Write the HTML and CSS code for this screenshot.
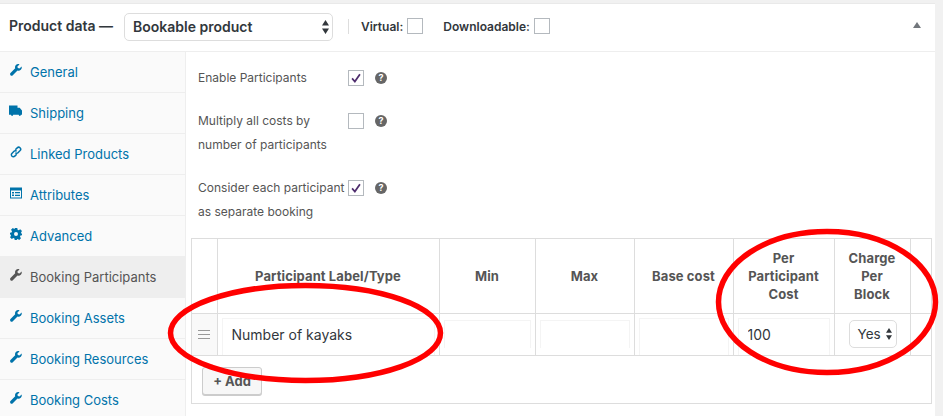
FILE: index.html
```html
<!DOCTYPE html>
<html lang="en">
<head>
<meta charset="utf-8">
<title>Product data</title>
<link rel="stylesheet" href="styles.css">
</head>
<body>
<svg width="0" height="0" class="defs">
  <defs>
    <symbol id="wrench" viewBox="0 0 12 12"><path d="M11.6 2.4 9.5 4.4 7.8 4 7.4 2.4 9.5.4C8.2-.2 6.8.1 5.9 1 5 1.9 4.8 3.2 5.2 4.3L.5 9c-.6.6-.6 1.6 0 2.2.6.7 1.6.7 2.3 0l4.7-4.6c1.1.4 2.4.1 3.3-.8.9-.9 1.2-2.2.8-3.4z"/></symbol>
    <symbol id="truck" viewBox="0 0 13 11"><path d="M0 0h8.5v2.2h2.2L13 5v4.3h-1.1a1.1 1.1 0 0 1-2.2 0H4.2a1.1 1.1 0 0 1-2.2 0H0z"/></symbol>
    <symbol id="link" viewBox="0 0 12 12"><path fill="none" stroke="currentColor" stroke-width="1.5" d="M5.3 3.8 7.2 1.9a1.9 1.9 0 0 1 2.9 2.7L8 6.7a1.9 1.9 0 0 1-2.7 0M6.7 8.2 4.8 10.1a1.9 1.9 0 0 1-2.9-2.7L4 5.3a1.9 1.9 0 0 1 2.7 0"/></symbol>
    <symbol id="card" viewBox="0 0 12 11"><path fill-rule="evenodd" d="M0 0h12v11H0zM1 3v7h10V3zM2 4.4h2v1.6H2zM5 4.6h5v1.1H5zM2 7h2v1.6H2zM5 7.3h5v1.1H5z"/></symbol>
    <symbol id="gear" viewBox="0 0 12 12"><path fill-rule="evenodd" d="M4.7 0h2.6l.3 1.7 1.1.5L10.200 1.200 12 3l-1 1.400.5 1.200L12 6v1.300l-1.500.3-.5 1.100 1 1.500-1.800 1.800-1.500-1-1.100.5L7.300 12H4.700l-.3-1.500-1.100-.5-1.500 1L0 9.200l1-1.500-.5-1.100L0 6.300V4.700l1.500-.3.500-1.100-1-1.500L2.800 0l1.500 1 .5-.3zM6 4a2 2 0 1 0 0 4 2 2 0 0 0 0-4z"/></symbol>
    <symbol id="arrows" viewBox="0 0 7 14"><path d="M3.500 0 7 5.500H0zM0 8.500h7L3.500 14z"/></symbol>
  </defs>
</svg>
<div class="page">
  <div class="panel">
    <header class="head">
      <strong class="title">Product data —</strong>
      <div class="select type-select"><span>Bookable product</span><svg class="sel-arrows"><use href="#arrows"/></svg></div>
      <span class="sep"></span>
      <label class="opt">Virtual: <span class="check"></span></label>
      <label class="opt opt-dl">Downloadable: <span class="check"></span></label>
      <span class="toggle"></span>
    </header>
    <div class="body">
      <nav class="tabs">
        <a class="tab"><svg class="ic"><use href="#wrench"/></svg>General</a>
        <a class="tab"><svg class="ic ic-w"><use href="#truck"/></svg>Shipping</a>
        <a class="tab"><svg class="ic"><use href="#link"/></svg>Linked Products</a>
        <a class="tab"><svg class="ic"><use href="#card"/></svg>Attributes</a>
        <a class="tab"><svg class="ic"><use href="#gear"/></svg>Advanced</a>
        <a class="tab active"><svg class="ic"><use href="#wrench"/></svg>Booking Participants</a>
        <a class="tab"><svg class="ic"><use href="#wrench"/></svg>Booking Assets</a>
        <a class="tab"><svg class="ic"><use href="#wrench"/></svg>Booking Resources</a>
        <a class="tab"><svg class="ic"><use href="#wrench"/></svg>Booking Costs</a>
      </nav>
      <main class="content">
        <div class="field f1">
          <label class="flabel">Enable Participants</label>
          <span class="check on"><svg viewBox="0 0 16 16"><path d="M3.500 8.500 6.700 12 12.500 3.800" fill="none" stroke="#4f2d6e" stroke-width="2"/></svg></span>
          <span class="help">?</span>
        </div>
        <div class="field f2">
          <label class="flabel">Multiply all costs by number of participants</label>
          <span class="check"></span>
          <span class="help">?</span>
        </div>
        <div class="field f3">
          <label class="flabel">Consider each participant as separate booking</label>
          <span class="check on"><svg viewBox="0 0 16 16"><path d="M3.500 8.500 6.700 12 12.500 3.800" fill="none" stroke="#4f2d6e" stroke-width="2"/></svg></span>
          <span class="help">?</span>
        </div>
        <div class="tablewrap">
          <table>
            <colgroup>
              <col class="c0"><col class="c1"><col class="c2"><col class="c3"><col class="c4"><col class="c5"><col class="c6"><col class="c7">
            </colgroup>
            <thead>
              <tr>
                <th></th>
                <th>Participant Label/Type</th>
                <th>Min</th>
                <th>Max</th>
                <th>Base cost</th>
                <th>Per Participant Cost</th>
                <th>Charge Per Block</th>
                <th></th>
              </tr>
            </thead>
            <tbody>
              <tr>
                <td class="drag"><span class="bars"></span></td>
                <td class="cell-label"><input class="inp" value="Number of kayaks"></td>
                <td><input class="inp short"></td>
                <td><input class="inp short"></td>
                <td><input class="inp"></td>
                <td><input class="inp" value="100"></td>
                <td class="cell-sel"><div class="select yes-select"><span>Yes</span><svg class="sel-arrows"><use href="#arrows"/></svg></div></td>
                <td></td>
              </tr>
            </tbody>
          </table>
          <div class="foot"><button class="btn">+ Add</button></div>
        </div>
      </main>
    </div>
  </div>
</div>
<svg class="marks" width="943" height="416" viewBox="0 0 943 416">
  <ellipse cx="305.500" cy="333" rx="135" ry="47.500"/>
  <ellipse cx="827" cy="302" rx="108.500" ry="70.500"/>
</svg>
</body>
</html>
```
FILE: styles.css
```css
* { box-sizing: border-box; }
html, body { margin: 0; height: 100%; }
body {
  position: relative;
  overflow: hidden;
  background: #f1f1f1;
  font-family: Inter, "Liberation Sans", sans-serif;
  font-size: 12px;
  color: #555;
}
.defs { position: absolute; }
.page { padding: 3px 8px 0 0; height: 416px; }
.panel { background: #fff; height: 413px; border-top: 1px solid #e9e9e9; }

.head {
  display: flex;
  align-items: center;
  height: 48px;
  padding-left: 9px;
  border-bottom: 1px solid #eee;
}
.title { font-size: 14px; font-weight: 600; color: #32373c; width: 115px; margin-top: -4px; }
.select {
  display: flex;
  align-items: center;
  justify-content: space-between;
  background: #fff;
  border: 1px solid #ddd;
  border-radius: 5px;
  color: #32373c;
}
.type-select {
  width: 209px;
  height: 28px;
  margin-top: -2px;
  padding: 0 3px 0 8px;
  font-size: 14px;
  font-weight: 600;
}
.sel-arrows { width: 7px; height: 14px; fill: #32373c; }
.sep { width: 1px; height: 15px; background: #ddd; margin: -3px 12px 0 15px; }
.opt { display: flex; align-items: center; gap: 4px; font-size: 12px; font-weight: 600; color: #32373c; margin-top: -3px; }
.opt-dl { margin-left: 20px; }
.opt .check { margin-top: -1px; }
.toggle {
  margin-left: auto;
  margin-right: 14px;
  margin-top: -6px;
  width: 0; height: 0;
  border-left: 4px solid transparent;
  border-right: 4px solid transparent;
  border-bottom: 6px solid #72777c;
}
.check {
  display: inline-block;
  flex: none;
  width: 16px; height: 16px;
  background: #fff;
  border: 1px solid #b4b9be;
}
.check svg { display: block; width: 14px; height: 14px; }

.body { display: flex; height: 364px; }
.tabs {
  flex: none;
  width: 186px;
  background: #fafafa;
  border-right: 1px solid #eee;
  display: flex;
  flex-direction: column;
}
.tab {
  display: flex;
  align-items: center;
  height: 41px;
  flex: none;
  padding: 0 0 1px 9px;
  font-size: 13px;
  color: #0073aa;
  border-bottom: 1px solid #eee;
}
.tab.active { background: #eee; color: #555; }
.ic { width: 12px; height: 12px; margin: -3px 8px 0 1px; fill: currentColor; flex: none; }
.ic-w { width: 13px; margin: -3px 8px 0 0; }

.content { flex: 1; padding: 0 4px 0 5px; display: flex; flex-direction: column; min-width: 0; }
.field { position: relative; display: flex; align-items: flex-start; padding-left: 7px; font-size: 12px; line-height: 24px; }
.f1 { padding-top: 14px; height: 57px; }
.f2 { height: 67px; }
.f3 { height: 62px; }
.flabel { width: 150px; flex: none; color: #555; }
.field .check { margin-top: 4px; }
.help {
  width: 12px; height: 12px;
  flex: none;
  margin: 6px 0 0 11px;
  border-radius: 50%;
  background: #666;
  color: #fff;
  font-size: 9px;
  font-weight: 700;
  line-height: 12px;
  text-align: center;
}

.tablewrap { width: 741px; border: 1px solid #ddd; border-top: 0; height: 166px; }
table { border-collapse: collapse; table-layout: fixed; width: 739px; }
.c0 { width: 25px; } .c1 { width: 222px; } .c2 { width: 96px; } .c3 { width: 99px; }
.c4 { width: 99px; } .c5 { width: 101px; } .c6 { width: 76px; } .c7 { width: 21px; }
th, td { border: 1px solid #ddd; padding: 0; }
tr > :first-child { border-left: 0; }
tr > :last-child { border-right: 0; }
thead th { border-top: 1px solid #ddd; height: 75px; font-size: 13px; font-weight: 700; letter-spacing: .1px; line-height: 18px; color: #555; padding: 0 11px; }
tbody td { height: 42px; padding: 4px 4px 0; vertical-align: top; }
td.drag { background: #f9f9f9; padding: 0; vertical-align: middle; }
.bars {
  display: block;
  width: 12px; height: 9px; margin: -1px auto 0;
  border-top: 1px solid #999; border-bottom: 1px solid #999;
  background: linear-gradient(#999,#999) center/100% 1px no-repeat;
}
.inp {
  display: block;
  width: 100%;
  height: 37px;
  border: 1px solid #f4f4f4;
  border-bottom: 0;
  background: #fff;
  padding: 0 9px 5px;
  font: 14px Inter, "Liberation Sans", sans-serif;
  color: #32373c;
  outline: 0;
}
.short { margin-top: 2px; height: 28px; }
.cell-sel { padding: 6px 0 0 14px !important; }
.yes-select {
  width: 48px; height: 28px;
  padding: 0 4px 0 8px;
  font-size: 13.500px;
}
.yes-select .sel-arrows { width: 6px; height: 12px; }
.foot { padding: 11px 0 0 10px; }
.btn {
  display: block;
  width: 60px; height: 28px;
  padding: 0;
  font: 700 13px Inter, "Liberation Sans", sans-serif;
  color: #555;
  background: #f7f7f7;
  border: 1px solid #ccc;
  border-radius: 3px;
  box-shadow: 0 1px 0 #ccc;
}
.marks { position: absolute; left: 0; top: 0; pointer-events: none; }
.marks ellipse { fill: none; stroke: #f00; stroke-width: 5.500; }
```
